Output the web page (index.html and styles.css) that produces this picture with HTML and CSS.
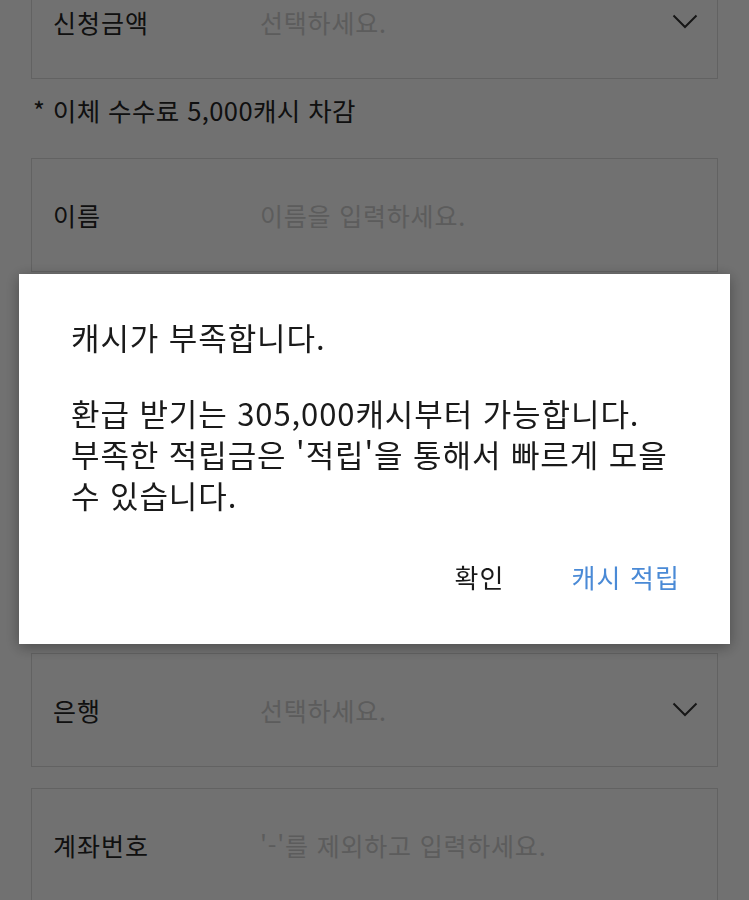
FILE: index.html
```html
<!DOCTYPE html>
<html lang="ko">
<head>
<meta charset="utf-8">
<title>환급 신청</title>
<link rel="stylesheet" href="styles.css">
</head>
<body>
<main class="page">
  <div class="field field-first">
    <span class="label">신청금액</span>
    <span class="placeholder">선택하세요.</span>
    <svg class="chevron" width="26" height="15" viewBox="0 0 26 15"><polyline points="1.5,1.5 13,13 24.5,1.5" fill="none" stroke="currentColor" stroke-width="2"/></svg>
  </div>
  <p class="note">* 이체 수수료 5,000캐시 차감</p>
  <div class="field">
    <span class="label">이름</span>
    <span class="placeholder">이름을 입력하세요.</span>
  </div>
  <div class="hidden-area"></div>
  <div class="field">
    <span class="label">은행</span>
    <span class="placeholder">선택하세요.</span>
    <svg class="chevron" width="26" height="15" viewBox="0 0 26 15"><polyline points="1.5,1.5 13,13 24.5,1.5" fill="none" stroke="currentColor" stroke-width="2"/></svg>
  </div>
  <div class="field">
    <span class="label">계좌번호</span>
    <span class="placeholder">'-'를 제외하고 입력하세요.</span>
  </div>
</main>

<div class="overlay"></div>

<div class="dialog" role="dialog">
  <p class="msg msg-title">캐시가 부족합니다.</p>
  <p class="msg">환급 받기는 305,000캐시부터 가능합니다.<br>부족한 적립금은 '적립'을 통해서 빠르게 모을<br>수 있습니다.</p>
  <div class="actions">
    <span class="btn btn-ok">확인</span>
    <span class="btn btn-primary">캐시 적립</span>
  </div>
</div>
</body>
</html>
```
FILE: styles.css
```css
* { box-sizing: border-box; }

html, body {
  margin: 0;
  padding: 0;
  background: #ffffff;
  overflow: hidden;
}

body {
  font-family: "Noto Sans CJK KR", "Noto Sans", sans-serif;
  width: 749px;
  height: 900px;
}

.page {
  padding: 0 31px;
  display: flex;
  flex-direction: column;
}

.field {
  height: 114px;
  border: 1px solid #dddddd;
  display: flex;
  align-items: center;
  padding: 0 19px 0 21px;
  margin-bottom: 21px;
}

.field-first {
  margin-top: -35px;
  margin-bottom: 0;
}

.label {
  width: 207px;
  font-size: 25px;
  letter-spacing: 1px;
  line-height: 36px;
  color: #262626;
  flex-shrink: 0;
}

.placeholder {
  flex: 1;
  font-size: 25px;
  letter-spacing: 0.8px;
  line-height: 36px;
  color: #d0d0d0;
}

.chevron {
  color: #333333;
  flex-shrink: 0;
  margin-top: -2px;
}

.note {
  margin: 13px 0 30px 2px;
  font-size: 25.5px;
  letter-spacing: 0.4px;
  line-height: 36px;
  color: #262626;
}

.hidden-area {
  height: 339px;
  margin-bottom: 21px;
}

.overlay {
  position: fixed;
  inset: 0;
  background: rgba(0, 0, 0, 0.557);
}

.dialog {
  position: fixed;
  left: 19px;
  top: 274px;
  width: 711px;
  height: 370px;
  background: #ffffff;
  padding: 42px 50px 0 52px;
  box-shadow: 0 3px 14px rgba(0, 0, 0, 0.35);
}

.msg {
  margin: 0;
  font-size: 31px;
  letter-spacing: 0.9px;
  line-height: 41px;
  color: #1a1a1a;
  white-space: nowrap;
}

.msg-title {
  margin-bottom: 35px;
}

.actions {
  display: flex;
  justify-content: flex-end;
  gap: 67px;
  margin-top: 44px;
}

.btn {
  font-size: 26px;
  letter-spacing: 1.1px;
  line-height: 36px;
}

.btn-ok { color: #1a1a1a; }
.btn-primary { color: #4a8ad6; }
```
